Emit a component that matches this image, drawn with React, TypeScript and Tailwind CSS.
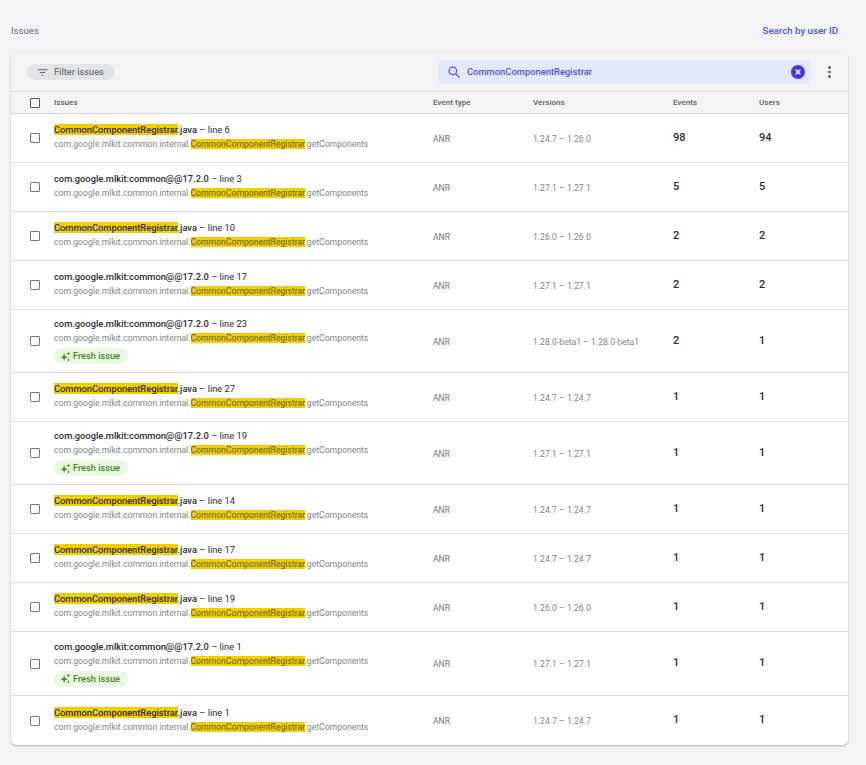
import React from "react";

const HL = "CommonComponentRegistrar";

type Row = { java: boolean; line: number; ver: string; ev: number; us: number; h: string };

const rows: Row[] = [
  { java: true, line: 6, ver: "1.24.7 – 1.26.0", ev: 98, us: 94, h: "h-[49px]" },
  { java: false, line: 3, ver: "1.27.1 – 1.27.1", ev: 5, us: 5, h: "h-[49px]" },
  { java: true, line: 10, ver: "1.26.0 – 1.26.0", ev: 2, us: 2, h: "h-[49px]" },
  { java: false, line: 17, ver: "1.27.1 – 1.27.1", ev: 2, us: 2, h: "h-[49px]" },
  { java: false, line: 23, ver: "1.28.0-beta1 – 1.28.0-beta1", ev: 2, us: 1, h: "h-[63px]" },
  { java: true, line: 27, ver: "1.24.7 – 1.24.7", ev: 1, us: 1, h: "h-[49px]" },
  { java: false, line: 19, ver: "1.27.1 – 1.27.1", ev: 1, us: 1, h: "h-[63px]" },
  { java: true, line: 14, ver: "1.24.7 – 1.24.7", ev: 1, us: 1, h: "h-[49px]" },
  { java: true, line: 17, ver: "1.24.7 – 1.24.7", ev: 1, us: 1, h: "h-[49px]" },
  { java: true, line: 19, ver: "1.26.0 – 1.26.0", ev: 1, us: 1, h: "h-[49px]" },
  { java: false, line: 1, ver: "1.27.1 – 1.27.1", ev: 1, us: 1, h: "h-[64px]" },
  { java: true, line: 1, ver: "1.24.7 – 1.24.7", ev: 1, us: 1, h: "h-[49px]" },
];

function Mark({ children }: { children: React.ReactNode }) {
  return <span className="bg-[#f4cf00]">{children}</span>;
}

function Sparkle() {
  return (
    <svg width="11" height="11" viewBox="0 0 24 24" fill="#3f8a23" className="shrink-0">
      <path d="M9 5l2.2 6.3L17.5 13.5 11.2 15.7 9 22l-2.2-6.3L.5 13.5l6.3-2.2z" />
      <path d="M18.5 1l1.2 3.3L23 5.5l-3.3 1.2L18.5 10l-1.2-3.3L14 5.5l3.3-1.2z" />
      <path d="M18.5 16l1 2.5 2.5 1-2.5 1-1 2.5-1-2.5-2.5-1 2.5-1z" />
    </svg>
  );
}

function Check({ dark }: { dark?: boolean }) {
  return (
    <div
      className={`w-[10px] h-[10px] rounded-[1px] border-[1.5px] bg-transparent ${
        dark ? "border-[#555]" : "border-[#777]"
      }`}
    />
  );
}

const grid = "grid grid-cols-[43px_379px_100px_140px_86px_1fr] items-center";

function IssueRow({ r, last }: { r: Row; last: boolean }) {
  const fresh = r.h !== "h-[49px]";
  return (
    <div className={`${grid} ${r.h} ${last ? "" : "border-b border-[#dedfe0]"}`}>
      <div className="pl-[19px]">
        <Check />
      </div>
      <div className="flex flex-col min-w-0 pb-[1px]">
        <div className="text-[9.3px] leading-[14px] text-[#2b2c2f] font-medium whitespace-nowrap">
          {r.java ? (
            <>
              <Mark>{HL}</Mark>.java
            </>
          ) : (
            "com.google.mlkit:common@@17.2.0"
          )}
          <span className="font-normal"> – line {r.line}</span>
        </div>
        <div className="text-[8.65px] leading-[15px] text-[#80868b] whitespace-nowrap">
          com.google.mlkit.common.internal.<Mark><span className="text-[#5f5a20]">{HL}</span></Mark>.getComponents
        </div>
        {fresh && (
          <div className="mt-[2px] self-start flex items-center gap-[2px] h-[16px] w-[74px] pl-[6px] rounded-full bg-[#ecf7e5] text-[9.2px] font-medium text-[#3f8a23]">
            <Sparkle />
            <span>Fresh issue</span>
          </div>
        )}
      </div>
      <div className="pt-[2px] text-[8.6px] text-[#70757a]">ANR</div>
      <div className="pt-[2px] text-[8.65px] text-[#80868b] whitespace-nowrap">{r.ver}</div>
      <div className="text-[11px] font-medium text-[#2b2c2f]">{r.ev}</div>
      <div className="text-[11px] font-medium text-[#2b2c2f]">{r.us}</div>
    </div>
  );
}

export default function App() {
  return (
    <div className="min-h-[765px] bg-[#f4f4f6] pt-[24px] px-[11px] font-['Roboto',sans-serif]">
      <div className="flex items-center justify-between h-[14px] pr-[17px]">
        <span className="text-[9.6px] text-[#5f6b78]">Issues</span>
        <span className="text-[9.7px] font-medium text-[#4a55d8]">Search by user ID</span>
      </div>
      <div className="mt-[15px] w-[837px] rounded-[5px] bg-white shadow-[0_1px_2px_rgba(60,64,67,0.35),0_0_1px_rgba(60,64,67,0.2)] overflow-hidden">
        <div className="flex items-center h-[39px] bg-[#f4f4f5] border-b border-[#d9dadb] pl-[16px] pr-[12px]">
          <div className="flex items-center gap-[6px] h-[16px] w-[88px] pl-[10px] rounded-full bg-[#e3e4e5] text-[9.2px] font-medium text-[#70757a]">
            <svg width="11" height="11" viewBox="0 0 24 24" fill="#5f6368">
              <path d="M1 5h22v2H1zM6 11h12v2H6zM10 17h4v2h-4z" />
            </svg>
            <span>Filter issues</span>
          </div>
          <div className="ml-[323px] flex items-center h-[24px] w-[373px] rounded-[5px] bg-[#e3e8fb] pl-[9px] pr-[6px]">
            <svg width="14" height="14" viewBox="0 0 24 24" fill="none" stroke="#4a55d8" strokeWidth="2.1">
              <circle cx="10" cy="10" r="6.5" />
              <path d="M15 15l6.5 6.5" />
            </svg>
            <span className="ml-[6px] text-[9.4px] font-medium text-[#4a55d8]">{HL}</span>
            <div className="ml-auto flex items-center justify-center w-[14px] h-[14px] rounded-full bg-[#4338e0]">
              <svg width="8" height="8" viewBox="0 0 10 10" stroke="white" strokeWidth="1.7">
                <path d="M2 2l6 6M8 2l-6 6" />
              </svg>
            </div>
          </div>
          <div className="ml-[17px] flex flex-col gap-[2px] items-center">
            <div className="w-[2.5px] h-[2.5px] rounded-full bg-[#5f6368]" />
            <div className="w-[2.5px] h-[2.5px] rounded-full bg-[#5f6368]" />
            <div className="w-[2.5px] h-[2.5px] rounded-full bg-[#5f6368]" />
          </div>
        </div>
        <div className={`${grid} h-[22px] bg-[#f4f4f5] border-b border-[#d3d4d5] text-[8.1px] font-medium text-[#5f6368]`}>
          <div className="pl-[19px]">
            <Check dark />
          </div>
          <div>Issues</div>
          <div>Event type</div>
          <div>Versions</div>
          <div>Events</div>
          <div>Users</div>
        </div>
        {rows.map((r, i) => (
          <IssueRow key={i} r={r} last={i === rows.length - 1} />
        ))}
      </div>
    </div>
  );
}
